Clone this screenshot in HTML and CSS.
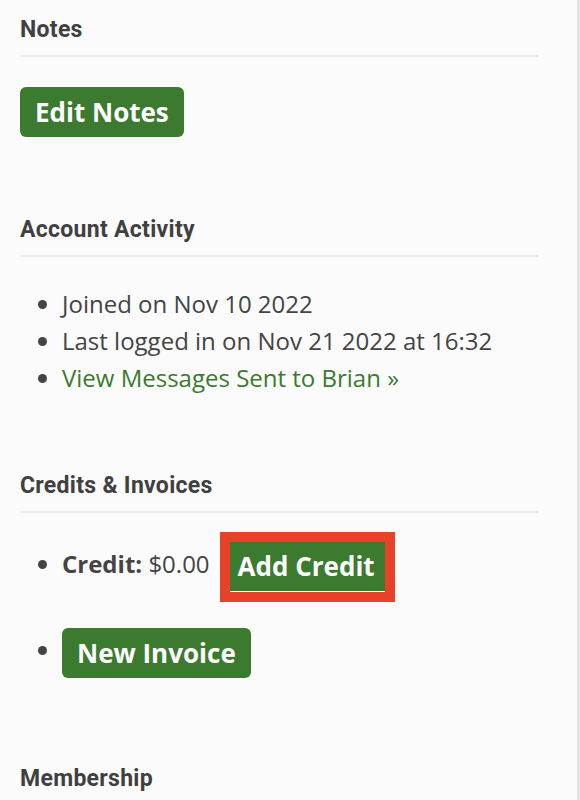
FILE: index.html
```
<!DOCTYPE html>
<html lang="en">
<head>
<meta charset="utf-8">
<title>Member Details</title>
<link rel="stylesheet" href="styles.css">
</head>
<body>
<div class="panel">
  <section class="section section-notes">
    <h2 class="section-title">Notes</h2>
    <div class="section-body">
      <a class="btn" href="#">Edit Notes</a>
    </div>
  </section>

  <section class="section section-activity">
    <h2 class="section-title">Account Activity</h2>
    <ul class="activity-list">
      <li>Joined on Nov 10 2022</li>
      <li>Last logged in on Nov 21 2022 at 16:32</li>
      <li><a class="text-link" href="#">View Messages Sent to Brian »</a></li>
    </ul>
  </section>

  <section class="section section-credits">
    <h2 class="section-title">Credits &amp; Invoices</h2>
    <ul class="credit-list">
      <li><span class="credit-label">Credit:</span> $0.00<a class="btn btn-credit" href="#">Add Credit</a></li>
      <li><a class="btn" href="#">New Invoice</a></li>
    </ul>
  </section>

  <section class="section section-membership">
    <h2 class="section-title">Membership</h2>
  </section>
</div>
</body>
</html>
```

FILE: styles.css
```
html, body {
  margin: 0;
  padding: 0;
  background: #fbfbfb;
}

body {
  width: 580px;
  height: 800px;
  overflow: hidden;
  font-family: "Open Sans", "Liberation Sans", sans-serif;
  color: #444444;
}

.panel {
  width: 557px;
  height: 800px;
  padding-left: 20px;
  border-right: 3px solid #e3e3e3;
}

.section {
  width: 518px;
}

.section-title {
  margin: 0;
  padding-top: 17px;
  padding-bottom: 12px;
  font-family: Roboto, "Liberation Sans", sans-serif;
  font-weight: 700;
  font-size: 23px;
  line-height: 26px;
  letter-spacing: 0.3px;
  color: #404040;
  border-bottom: 2px solid #ececec;
}

.section-membership .section-title {
  border-bottom: none;
}

.section-body {
  display: flex;
  padding-top: 30px;
}

.btn {
  display: inline-block;
  height: 50px;
  line-height: 50px;
  padding: 0 15px;
  background: #3b7a2f;
  color: #ffffff;
  font-family: "Open Sans", "Liberation Sans", sans-serif;
  font-weight: 700;
  font-size: 26px;
  text-decoration: none;
  border-radius: 6px;
  box-sizing: border-box;
  vertical-align: middle;
}

.section-notes {
  padding-bottom: 63px;
}

.activity-list {
  margin: 28px 0 0 0;
  padding-left: 42px;
  font-size: 24px;
  line-height: 37px;
}

.section-activity {
  padding-bottom: 60px;
}

.text-link {
  color: #3b7a2f;
  text-decoration: none;
}

.credit-list {
  margin: 26px 0 0 0;
  padding-left: 42px;
  font-size: 24px;
  line-height: 50px;
}

.credit-list li {
  height: 50px;
  margin-bottom: 36px;
}

.credit-list li:last-child {
  margin-bottom: 0;
}

.credit-label {
  font-weight: 700;
}

.btn-credit {
  margin-left: 20px;
  padding: 0 10px 0 8px;
  border-radius: 0;
  border-bottom: 1px solid #ffffff;
  line-height: 49px;
  outline: 10px solid #e8412a;
}

.section-credits {
  padding-bottom: 74px;
}
```
